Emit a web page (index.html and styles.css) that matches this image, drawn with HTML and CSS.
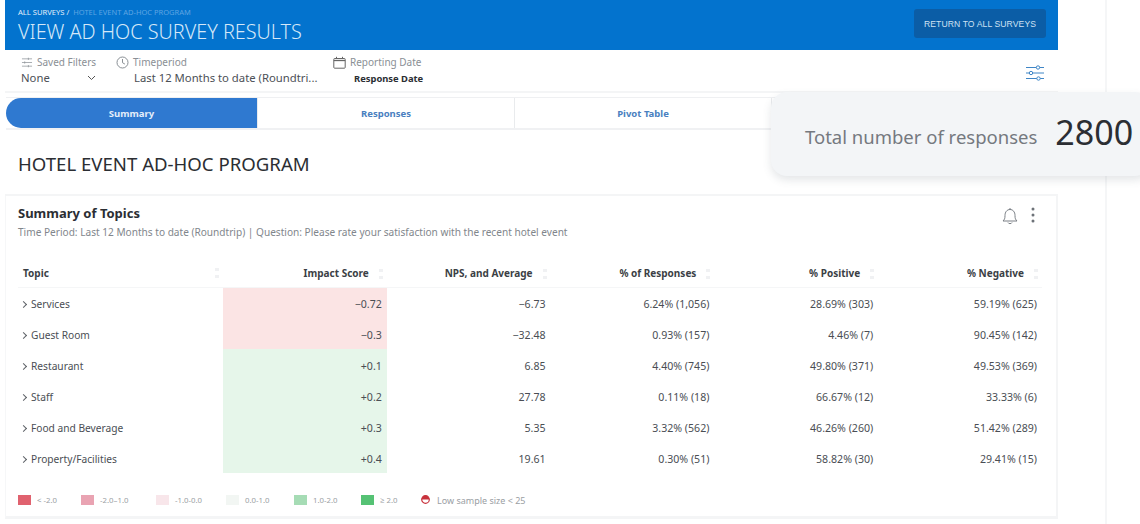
FILE: index.html
```html
<!DOCTYPE html>
<html lang="en">
<head>
<meta charset="utf-8">
<title>View Ad Hoc Survey Results</title>
<link rel="stylesheet" href="styles.css">
</head>
<body>
<div class="rail"></div>
<main class="page">
  <header class="hero">
    <div>
      <div class="crumbs"><b>ALL SURVEYS</b> / <span>HOTEL EVENT AD-HOC PROGRAM</span></div>
      <h1>VIEW AD HOC SURVEY RESULTS</h1>
    </div>
    <button class="return">RETURN TO ALL SURVEYS</button>
  </header>

  <section class="filters">
    <div class="filter f-saved">
      <div class="f-label">
        <svg width="12" height="11" viewBox="0 0 13 12" fill="none" stroke="#8b9096" stroke-width=".8"><path d="M1 2h11M1 6h11M1 10h11"/><path d="M8 .8v2.400M4 4.800v2.400M8 8.800v2.400"/></svg>
        Saved Filters
      </div>
      <div class="f-value split">None
        <svg width="9" height="6" viewBox="0 0 9 6" fill="none" stroke="#555" stroke-width="1"><path d="M1 1l3.500 3.500L8 1"/></svg>
      </div>
    </div>
    <div class="filter f-time">
      <div class="f-label">
        <svg width="13" height="13" viewBox="0 0 13 13" fill="none" stroke="#7d8389" stroke-width=".9"><circle cx="6.500" cy="6.500" r="5.500"/><path d="M6.500 3v3.700l2.400 1.400"/></svg>
        Timeperiod
      </div>
      <div class="f-value indent">Last 12 Months to date (Roundtri...</div>
    </div>
    <div class="filter f-date">
      <div class="f-label">
        <svg width="13" height="13" viewBox="0 0 13 13" fill="none" stroke="#666" stroke-width="1"><rect x=".8" y="2.500" width="11.400" height="9.700" rx=".8"/><path d="M.8 4.500h11.400" stroke-width="1.300"/><path d="M3.500 .8v2M9.500 .8v2"/></svg>
        Reporting Date
      </div>
      <div class="f-strong">Response Date</div>
    </div>
    <svg class="tune" width="18" height="16" viewBox="0 0 18 16" fill="none" stroke="#3f86c6" stroke-width="1"><path d="M0 2.500h18M0 8h18M0 13.500h18"/><g fill="#fff"><circle cx="12" cy="2.500" r="1.700"/><circle cx="5" cy="8" r="1.700"/><circle cx="12.500" cy="13.500" r="1.700"/></g></svg>
  </section>

  <nav class="tabs">
    <a class="tab active">Summary</a>
    <a class="tab">Responses</a>
    <a class="tab">Pivot Table</a>
    <a class="tab"></a>
  </nav>

  <h2 class="program">HOTEL EVENT AD-HOC PROGRAM</h2>

  <section class="card">
    <div class="card-head">
      <div>
        <h3>Summary of Topics</h3>
        <p>Time Period: Last 12 Months to date (Roundtrip) | Question: Please rate your satisfaction with the recent hotel event</p>
      </div>
      <div class="card-tools">
        <svg width="16" height="18" viewBox="0 0 16 18" fill="none" stroke="#7a7f85" stroke-width="1"><path d="M1 14c1.500-1.500 2-2.500 2-5.500C3 5 5 2.500 8 2.500S13 5 13 8.500c0 3 .5 4 2 5.500z"/><path d="M8 1v1.500M6 15.500c.5 1.500 3.500 1.500 4 0"/></svg>
        <svg width="4" height="16" viewBox="0 0 4 16" fill="#6d7278"><circle cx="2" cy="2" r="1.500"/><circle cx="2" cy="8" r="1.500"/><circle cx="2" cy="14" r="1.500"/></svg>
      </div>
    </div>

    <table class="topics">
      <thead>
        <tr>
          <th class="topic">Topic<i class="sort abs"></i></th>
          <th>Impact Score<i class="sort"></i></th>
          <th>NPS, and Average<i class="sort"></i></th>
          <th>% of Responses<i class="sort"></i></th>
          <th>% Positive<i class="sort"></i></th>
          <th>% Negative<i class="sort"></i></th>
        </tr>
      </thead>
      <tbody>
        <tr><td class="topic"><i class="chev"></i>Services</td><td class="neg">−0.72</td><td>−6.73</td><td>6.24% (1,056)</td><td>28.69% (303)</td><td>59.19% (625)</td></tr>
        <tr><td class="topic"><i class="chev"></i>Guest Room</td><td class="neg">−0.3</td><td>−32.48</td><td>0.93% (157)</td><td>4.46% (7)</td><td>90.45% (142)</td></tr>
        <tr><td class="topic"><i class="chev"></i>Restaurant</td><td class="pos">+0.1</td><td>6.85</td><td>4.40% (745)</td><td>49.80% (371)</td><td>49.53% (369)</td></tr>
        <tr><td class="topic"><i class="chev"></i>Staff</td><td class="pos">+0.2</td><td>27.78</td><td>0.11% (18)</td><td>66.67% (12)</td><td>33.33% (6)</td></tr>
        <tr><td class="topic"><i class="chev"></i>Food and Beverage</td><td class="pos">+0.3</td><td>5.35</td><td>3.32% (562)</td><td>46.26% (260)</td><td>51.42% (289)</td></tr>
        <tr><td class="topic"><i class="chev"></i>Property/Facilities</td><td class="pos">+0.4</td><td>19.61</td><td>0.30% (51)</td><td>58.82% (30)</td><td>29.41% (15)</td></tr>
      </tbody>
    </table>

    <ul class="legend">
      <li class="k1"><i></i>&lt; -2.0</li>
      <li class="k2"><i></i>-2.0–1.0</li>
      <li class="k3"><i></i>-1.0-0.0</li>
      <li class="k4"><i></i>0.0-1.0</li>
      <li class="k5"><i></i>1.0-2.0</li>
      <li class="k6"><i></i>≥ 2.0</li>
      <li class="low"><svg width="9" height="10" viewBox="0 0 9 10"><circle cx="4.500" cy="4.500" r="3.800" fill="#fff" stroke="#c8323c" stroke-width="1.200"/><path d="M.7 4.500a3.800 3.800 0 0 1 7.600 0z" fill="#c8323c"/></svg>Low sample size &lt; 25</li>
    </ul>
  </section>
</main>

<aside class="total">
  <span class="total-label">Total number of responses</span>
  <span class="total-num">2800</span>
</aside>
</body>
</html>
```

FILE: styles.css
```css
* { box-sizing: border-box; }
html, body { margin: 0; height: 524px; overflow: hidden; }
body {
  background: #fff;
  font-family: "Noto Sans", "Open Sans", sans-serif;
  color: #33373c;
  position: relative;
}
.rail {
  position: absolute;
  left: 1058px;
  top: 0;
  width: 49px;
  height: 524px;
  border-right: 2px solid #f5f6f7;
}
.page {
  width: 1053px;
  margin-left: 5px;
  display: flex;
  flex-direction: column;
}
.hero {
  height: 50px;
  background: #0373ce;
  display: flex;
  justify-content: space-between;
  align-items: flex-start;
  padding: 8px 12px 0 13px;
}
.crumbs {
  font-size: 7.500px;
  line-height: 8px;
  color: #e2eefa;
  white-space: nowrap;
}
.crumbs b { font-weight: 400; font-size: 7.600px; }
.crumbs span { color: #5ea5e2; margin-left: 2px; }
h1 {
  margin: 4px 0 0;
  font-size: 19.800px;
  line-height: 24px;
  font-weight: 300;
  color: #d5e8f8;
  white-space: nowrap;
}
.return {
  width: 132px;
  height: 29px;
  margin-top: 1px;
  border: 0;
  border-radius: 3px;
  background: #0b5da6;
  color: #cfe2f3;
  font: 400 8.600px "Liberation Sans", sans-serif;
  letter-spacing: .1px;
}
.filters {
  height: 43px;
  display: flex;
  align-items: flex-start;
  padding: 4px 14px 0 16px;
  position: relative;
  border-bottom: 2px solid #f4f5f6;
}
.filter { flex: none; }
.f-saved { width: 95px; }
.f-time { width: 217px; }
.f-label {
  display: flex;
  align-items: center;
  gap: 4px;
  height: 16px;
  font-size: 10px;
  color: #8a8f95;
  white-space: nowrap;
}
.f-value {
  font-size: 11.300px;
  line-height: 16px;
  color: #4c5056;
  white-space: nowrap;
}
.split {
  display: flex;
  justify-content: space-between;
  align-items: center;
  width: 75px;
}
.indent { padding-left: 18px; }
.f-strong {
  margin: 1px 0 0 21px;
  font-size: 9.400px;
  line-height: 16px;
  font-weight: 700;
  color: #2b2e33;
  white-space: nowrap;
}
.tune { margin: 11px 0 0 auto; }
.tabs {
  display: flex;
  height: 33px;
  margin: 4px 0 0 1px;
  border-bottom: 2px solid #f0f1f3;
  border-top: 1px solid #eff0f2;
}
.tab {
  flex: 0 0 257px;
  display: flex;
  align-items: center;
  justify-content: center;
  font-size: 9.500px;
  font-weight: 700;
  color: #4a7fc0;
  border-left: 1px solid #e9ebed;
}
.tab.active {
  flex-basis: 251px;
  background: #2f79d0;
  color: #e4eefa;
  border-radius: 16px 0 0 16px;
  border-left: 0;
}
.program {
  margin: 0;
  height: 66px;
  padding: 22px 0 0 13px;
  font-size: 18.600px;
  line-height: 24px;
  font-weight: 400;
  color: #2b2e33;
  border-bottom: 2px solid #f4f5f6;
}
.card {
  height: 323px;
  border-right: 2px solid #f4f5f6;
  border-left: 1px solid #f6f7f8;
  border-bottom: 3px solid #f4f5f6;
  padding: 0 0 0 12px;
}
.card-head {
  display: flex;
  justify-content: space-between;
  height: 63px;
  padding-top: 7px;
}
h3 {
  margin: 0;
  font-size: 13px;
  line-height: 20px;
  font-weight: 700;
  color: #2b2e33;
}
.card-head p {
  margin: 2px 0 0;
  font-size: 10.100px;
  line-height: 14px;
  color: #81868c;
  white-space: nowrap;
}
.card-tools {
  display: flex;
  align-items: flex-start;
  gap: 13px;
  padding: 4px 21px 0 0;
}
.topics {
  table-layout: fixed;
  border-collapse: collapse;
  width: 1024px;
}
.topics th:first-child, .topics td:first-child { width: 205px; }
.topics th {
  height: 28px;
  font-size: 10px;
  font-weight: 700;
  color: #3b3f45;
  text-align: right;
  padding: 0 4px 0 0;
  border-bottom: 1px solid #f5f6f7;
  white-space: nowrap;
}
.topics td {
  height: 31px;
  font-size: 10.600px;
  color: #4a4e54;
  text-align: right;
  padding: 3px 5px 0 0;
  white-space: nowrap;
}
.topics th.topic { text-align: left; padding-left: 5px; position: relative; }
.topics td.topic { text-align: left; padding-left: 3px; font-size: 10.200px; }
.neg { background: #fbe4e4; }
.pos { background: #e6f6ea; }
.sort {
  display: inline-block;
  width: 4px;
  height: 10px;
  margin-left: 10px;
  vertical-align: -2px;
  background: linear-gradient(#f0f1f3 0 3px, transparent 3px 7px, #f0f1f3 7px);
}
.sort.abs { position: absolute; right: 4px; top: 9px; }
.chev {
  display: inline-block;
  width: 5px;
  height: 5px;
  margin: 0 5px 1px 0;
  border-top: 1px solid #5c6066;
  border-right: 1px solid #5c6066;
  transform: rotate(45deg);
}
.legend {
  display: flex;
  align-items: center;
  list-style: none;
  margin: 20px 0 0;
  padding: 0;
  height: 14px;
  font-size: 7.800px;
  color: #9a9ea3;
}
.legend li { display: flex; align-items: center; gap: 6px; white-space: nowrap; }
.legend i { width: 13px; height: 10px; display: block; flex: none; }
.k1 { width: 63px; }
.k2 { width: 75px; }
.k3 { width: 70px; }
.k4 { width: 68px; }
.k5 { width: 67px; }
.k6 { width: 60px; }
.k1 i { background: #e0626f; }
.k2 i { background: #e9a3b2; }
.k3 i { background: #f8e6ea; }
.k4 i { background: #f2f6f3; }
.k5 i { background: #a6dcb5; }
.k6 i { background: #55c274; }
.legend .low { gap: 7px; font-size: 9px; }
.total {
  position: absolute;
  left: 771px;
  top: 92px;
  width: 380px;
  height: 84px;
  padding: 4px 0 0 34px;
  display: flex;
  align-items: center;
  gap: 18px;
  background: #f3f5f7;
  border-radius: 16px;
  box-shadow: 0 4px 8px rgba(90, 100, 110, .16);
}
.total-label {
  font-size: 18.500px;
  color: #75797f;
  margin-top: 1px;
  white-space: nowrap;
}
.total-num {
  font-size: 34px;
  color: #2b2e33;
  margin-top: -8px;
  line-height: 40px;
}
```
